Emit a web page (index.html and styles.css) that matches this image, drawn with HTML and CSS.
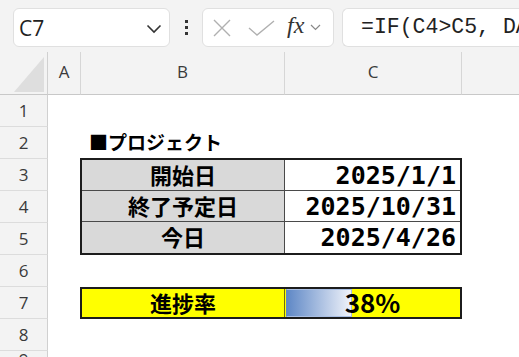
FILE: index.html
```html
<!DOCTYPE html>
<html lang="ja">
<head>
    <meta charset="UTF-8">
    <title>プロジェクト進捗</title>
    <link rel="stylesheet" href="styles.css">
</head>
<body>
    <div class="toolbar">
        <div class="name-box">
            <span class="cell-ref">C7</span>
            <svg class="chev" width="16" height="10" viewBox="0 0 16 10"><path d="M1.5 1.5 L8 8 L14.5 1.5" fill="none" stroke="#333" stroke-width="1.6"/></svg>
        </div>
        <div class="dots"><i></i><i></i><i></i></div>
        <div class="fx-box">
            <svg width="18" height="18" viewBox="0 0 18 18"><path d="M1 1 L17 17 M17 1 L1 17" stroke="#b0b0b0" stroke-width="1.4" fill="none"/></svg>
            <svg width="27" height="16" viewBox="0 0 27 16"><path d="M1 8 L9 15 L26 1" stroke="#b0b0b0" stroke-width="1.4" fill="none"/></svg>
            <span class="fx">fx</span>
            <svg width="11" height="7" viewBox="0 0 11 7"><path d="M1 1 L5.5 5.5 L10 1" stroke="#888" stroke-width="1.2" fill="none"/></svg>
        </div>
        <div class="formula">=IF(C4&gt;C5, DATEDIF(C3, C5, "D") / DATEDIF(C3, C4, "D"), 1)</div>
    </div>

    <div class="sheet">
        <div class="corner">
            <svg width="30" height="35" viewBox="0 0 30 35"><polygon points="0,35 30,35 30,0" fill="#dedede"/></svg>
        </div>
        <div class="col-head">A</div>
        <div class="col-head">B</div>
        <div class="col-head">C</div>
        <div class="col-head last"></div>

        <div class="row-head r1">1</div>
        <div class="row-head r2">2</div>
        <div class="row-head r3">3</div>
        <div class="row-head r4">4</div>
        <div class="row-head r5">5</div>
        <div class="row-head r6">6</div>
        <div class="row-head r7">7</div>
        <div class="row-head r8">8</div>
        <div class="row-head r9">9</div>

        <div class="title">■プロジェクト</div>

        <div class="info-table">
            <div class="label">開始日</div>
            <div class="value">2025/1/1</div>
            <div class="label">終了予定日</div>
            <div class="value">2025/10/31</div>
            <div class="label">今日</div>
            <div class="value">2025/4/26</div>
        </div>

        <div class="progress-row">
            <div class="progress-label">進捗率</div>
            <div class="progress-cell">
                <div class="data-bar" style="width: 38%"></div>
                <div class="progress-text">38%</div>
            </div>
        </div>
    </div>
</body>
</html>
```

FILE: styles.css
```css
body {
    margin: 0;
    width: 519px;
    height: 357px;
    overflow: hidden;
    background-color: #f3f3f3;
    font-family: "Open Sans", "Noto Sans", sans-serif;
    color: #222;
}

/* formula bar */
.toolbar {
    height: 52px;
    display: flex;
    align-items: flex-start;
    padding: 8px 0 0 13px;
    box-sizing: border-box;
    white-space: nowrap;
}
.toolbar > div { flex-shrink: 0; }
.name-box {
    width: 157px;
    height: 39px;
    box-sizing: border-box;
    background: #fff;
    border: 1px solid #e0e0e0;
    border-radius: 6px;
    display: flex;
    align-items: center;
    justify-content: space-between;
    padding: 0 7px 0 5px;
}
.cell-ref {
    font-size: 21px;
    color: #222;
}
.chev { margin-top: 2px; }
.dots {
    width: 32px;
    height: 39px;
    display: flex;
    flex-direction: column;
    align-items: center;
    justify-content: center;
    gap: 3px;
}
.dots i {
    width: 3px;
    height: 3px;
    background: #333;
}
.fx-box {
    width: 132px;
    height: 39px;
    box-sizing: border-box;
    background: #fff;
    border: 1px solid #e0e0e0;
    border-radius: 6px;
    display: flex;
    align-items: center;
    padding: 0 0 0 10px;
}
.fx-box svg:nth-child(2) { margin-left: 17px; }
.fx {
    font-family: "Liberation Serif", serif;
    font-style: italic;
    font-size: 24px;
    color: #333;
    margin: -4px 6px 0 12px;
}
.toolbar > .formula {
    flex: 1 1 0;
    min-width: 0;
    margin-left: 8px;
    height: 39px;
    box-sizing: border-box;
    background: #fff;
    border: 1px solid #e0e0e0;
    border-right: none;
    border-radius: 6px 0 0 6px;
    padding: 0 0 0 18px;
    font-family: "Liberation Mono", monospace;
    font-size: 21.5px;
    line-height: 37px;
    color: #222;
    overflow: hidden;
}

/* sheet grid */
.sheet {
    display: grid;
    grid-template-columns: 48px 33px 204px 177px 1fr;
    grid-template-rows: 43px repeat(9, 32px);
    background: #fff;
    line-height: 1;
}
.corner, .col-head {
    background: #f3f3f3;
    border-bottom: 1px solid #c8c8c8;
    box-sizing: border-box;
}
.corner {
    border-right: 1px solid #d0d0d0;
    display: flex;
    justify-content: flex-end;
    align-items: flex-end;
    padding: 0 3px 2px 0;
}
.col-head {
    border-right: 1px solid #d6d6d6;
    display: flex;
    align-items: center;
    justify-content: center;
    padding-bottom: 4px;
    font-size: 17px;
    color: #3a3a3a;
}
.col-head.last { border-right: none; }

.row-head {
    grid-column: 1;
    background: #f3f3f3;
    border-right: 1px solid #d0d0d0;
    border-bottom: 1px solid #dcdcdc;
    box-sizing: border-box;
    display: flex;
    align-items: center;
    justify-content: center;
    font-size: 17px;
    color: #3a3a3a;
}
.r1 { grid-row: 2; }
.r2 { grid-row: 3; }
.r3 { grid-row: 4; }
.r4 { grid-row: 5; }
.r5 { grid-row: 6; }
.r6 { grid-row: 7; }
.r7 { grid-row: 8; }
.r8 { grid-row: 9; }
.r9 { grid-row: 10; align-items: flex-start; padding-top: 0; }

.title {
    grid-column: 3;
    grid-row: 3;
    font-family: "Noto Sans CJK JP", sans-serif;
    font-weight: bold;
    font-size: 19px;
    color: #000;
    display: flex;
    align-items: center;
    padding: 0 0 3px 8px;
}

/* project table */
.info-table {
    grid-column: 3 / 5;
    grid-row: 4 / 7;
    margin: -1px 0 0 -1px;
    border: 2px solid #1c1c1c;
    display: grid;
    grid-template-columns: 203px minmax(0, 1fr);
    grid-template-rows: repeat(3, minmax(0, 1fr));
    overflow: hidden;
}
.label, .value {
    border-bottom: 1px solid #4a4a4a;
    display: flex;
    align-items: center;
    color: #000;
    font-weight: bold;
}
.label:nth-last-child(2), .value:last-child { border-bottom: none; }
.label {
    background: #d9d9d9;
    border-right: 1px solid #4a4a4a;
    justify-content: center;
    padding-bottom: 3px;
    font-family: "Noto Sans CJK JP", sans-serif;
    font-size: 22px;
}
.value {
    justify-content: flex-end;
    padding-right: 4px;
    font-family: "DejaVu Sans Mono", monospace;
    font-size: 25px;
}

/* progress row */
.progress-row {
    grid-column: 3 / 5;
    grid-row: 8;
    margin: 0 0 0 -1px;
    border: 2px solid #1c1c1c;
    background: #ffff00;
    display: grid;
    grid-template-columns: 203px minmax(0, 1fr);
    grid-template-rows: minmax(0, 1fr);
    overflow: hidden;
}
.progress-label {
    border-right: 1px solid #6e6e10;
    display: flex;
    align-items: center;
    justify-content: center;
    padding-bottom: 3px;
    font-family: "Noto Sans CJK JP", sans-serif;
    font-weight: bold;
    font-size: 22px;
    color: #000;
}
.progress-cell {
    display: grid;
    grid-template-rows: minmax(0, 1fr);
    padding: 0 1px;
}
.data-bar, .progress-text { grid-area: 1 / 1; }
.data-bar {
    box-sizing: border-box;
    background: linear-gradient(to right, #5f88c6, #f0f3fa);
    border: 1px solid #a9bfe4;
    border-left-color: #5f88c6;
}
.progress-text {
    display: flex;
    align-items: center;
    justify-content: center;
    padding-bottom: 2px;
    font-family: "Noto Sans CJK JP", sans-serif;
    font-weight: bold;
    font-size: 26px;
    color: #000;
}
```
